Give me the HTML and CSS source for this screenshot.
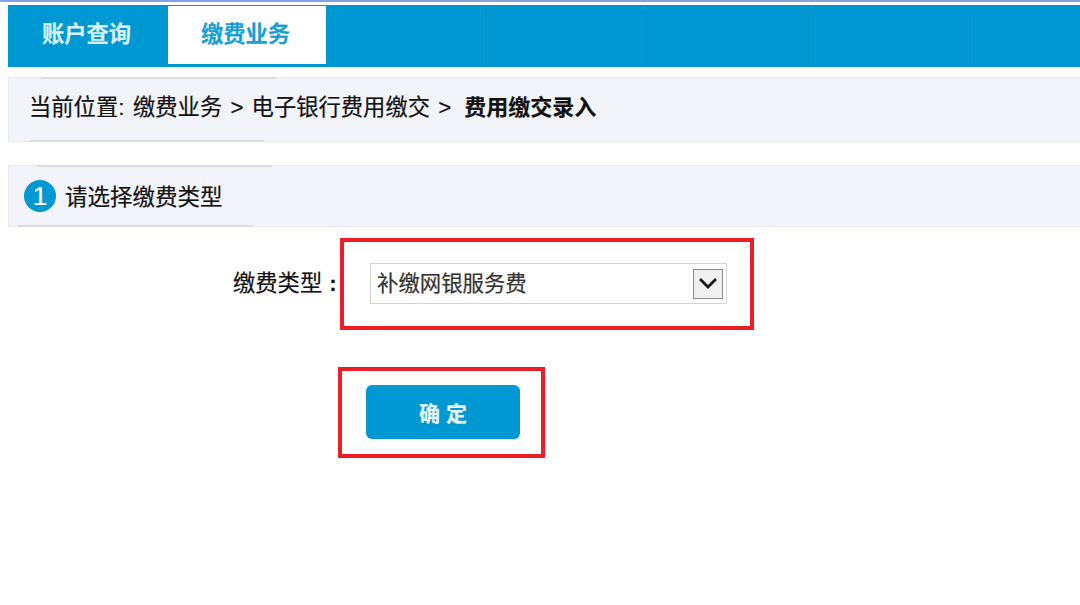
FILE: index.html
```html
<!DOCTYPE html>
<html>
  <head>
    <meta charset="utf-8" />
    <link rel="stylesheet" href="styles.css">
  </head>

  <body>
    <div class="top-strip"></div>

    <div class="nav">
      <a class="tab">账户查询</a>
      <a class="tab active">缴费业务</a>
      <span class="tab-empty"></span>
      <span class="tab-empty"></span>
      <span class="tab-empty"></span>
      <span class="tab-empty"></span>
    </div>

    <div class="bar crumbs">
      <span class="crumb-label">当前位置:</span>
      <span class="crumb-path">缴费业务 &gt; 电子银行费用缴交 &gt;</span>
      <b class="crumb-current">费用缴交录入</b>
    </div>

    <div class="bar step">
      <span class="step-num">1</span>
      <span class="step-title">请选择缴费类型</span>
    </div>

    <div class="form-row">
      <label class="form-label">缴费类型<span class="form-colon">:</span></label>
      <div class="mark mark-select">
        <div class="select">
          <span class="select-text">补缴网银服务费</span>
          <span class="select-arrow">
            <svg width="20" height="13" viewBox="0 0 20 13">
              <path d="M2 2 L10 10 L18 2" fill="none" stroke="#1a1a1a" stroke-width="2.8" />
            </svg>
          </span>
        </div>
      </div>
    </div>

    <div class="mark mark-button">
      <button class="submit">确 定</button>
    </div>
  </body>
</html>
```

FILE: styles.css
```css
html,
body {
  margin: 0;
  padding: 0;
  background: #fff;
  overflow: hidden;
}

body {
  color: #111;
  font-family: "Liberation Sans", "Noto Sans CJK SC", sans-serif;
  font-size: 22.3px;
  -webkit-text-stroke: 0.2px;
}

.top-strip {
  height: 2px;
  margin-bottom: 3px;
  background: #86a2e6;
}

.nav {
  display: flex;
  height: 62px;
  margin-left: 8px;
  background: #0098d2;
}
.tab {
  display: flex;
  align-items: center;
  justify-content: center;
  width: 160px;
  height: 58px;
  margin-top: 1px;
  padding: 0 3px 7px 0;
  box-sizing: border-box;
  color: #d8f1fb;
  font-weight: bold;
}
.tab.active {
  width: 158px;
  background: #fff;
  color: #1a9fd4;
}
.tab-empty {
  width: 161px;
  border-right: 1px solid #0090c6;
  box-sizing: border-box;
}

.bar {
  position: relative;
  display: flex;
  align-items: center;
  margin-left: 8px;
  background: #f3f4fa;
  border: 1px solid #ebecf0;
  border-right: 0;
  box-sizing: border-box;
}
.bar::before,
.bar::after {
  content: "";
  position: absolute;
  width: 235px;
  height: 2px;
  background: #dcdcdf;
}
.bar::before {
  top: -1px;
}
.bar::after {
  bottom: -1px;
}

.crumbs {
  height: 65px;
  margin-top: 10px;
  padding-left: 20px;
  padding-bottom: 10px;
}
.crumbs::before {
  left: 32px;
}
.crumbs::after {
  left: 20px;
}
.crumb-label {
  width: 104px;
  white-space: nowrap;
}
.crumb-path {
  word-spacing: 2px;
}
.crumb-current {
  margin-left: 13px;
  font-size: 22px;
}

.step {
  height: 62px;
  margin-top: 23px;
  padding-left: 15px;
  padding-bottom: 2px;
}
.step::before {
  left: 28px;
}
.step::after {
  left: 9px;
}
.step-num {
  display: flex;
  align-items: center;
  justify-content: center;
  width: 32px;
  height: 32px;
  margin-top: 2px;
  margin-right: 9px;
  border-radius: 50%;
  background: #0098d2;
  color: #fff;
  font-size: 26px;
}
.step-title {
  font-size: 22.5px;
}

.form-row {
  display: flex;
  align-items: center;
  margin-top: 11px;
  padding-left: 233px;
}
.form-label {
  width: 107px;
  padding-bottom: 6px;
  white-space: nowrap;
}
.form-colon {
  margin-left: 7px;
  font-weight: bold;
}

.mark {
  border: 4px solid #ee1c25;
  box-sizing: border-box;
}
.mark-select {
  width: 414px;
  height: 92px;
  padding: 21px 0 0 26px;
}
.mark-button {
  width: 207px;
  height: 91px;
  margin: 37px 0 0 338px;
  padding: 14px 0 0 24px;
}

.select {
  display: flex;
  align-items: center;
  justify-content: space-between;
  width: 357px;
  height: 41px;
  padding: 0 3px 0 6px;
  border: 1px solid #d4d4d4;
  box-sizing: border-box;
  background: #fff;
}
.select-text {
  padding-bottom: 5px;
  color: #333;
  font-size: 21.4px;
}
.select-arrow {
  display: flex;
  align-items: center;
  justify-content: center;
  width: 30px;
  height: 30px;
  border: 1px solid #8c8c8c;
  box-sizing: border-box;
  background: #f0f0f0;
}

.submit {
  width: 154px;
  height: 54px;
  padding: 0;
  border: 0;
  border-radius: 6px;
  background: #0098d2;
  color: #e9f8fd;
  font-family: inherit;
  font-size: 21px;
  font-weight: bold;
}
```
